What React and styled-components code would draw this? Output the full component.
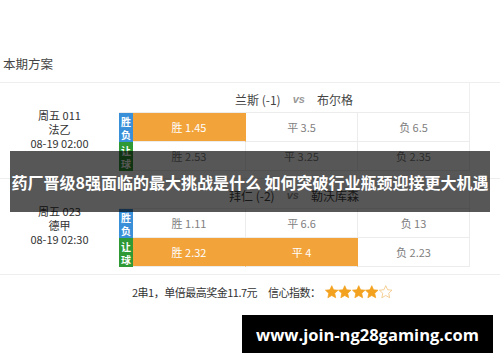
import React from 'react';
import styled, { createGlobalStyle } from 'styled-components';

const GlobalStyle = createGlobalStyle`
    html, body {
        margin: 0;
        padding: 0;
        background: #fff;
    }
    body {
        font-family: "Noto Sans CJK SC", "Liberation Sans", sans-serif;
        color: #333;
    }
`;

const matches = [
    {
        day: '周五 011',
        league: '法乙',
        time: '08-19 02:00',
        home: '兰斯 (-1)',
        away: '布尔格',
        rows: [
            { kind: 'win', odds: [['胜 1.45', true], ['平 3.5', false], ['负 6.5', false]] },
            { kind: 'handicap', odds: [['胜 2.53', false], ['平 3.25', false], ['负 2.35', false]] },
        ],
    },
    {
        day: '周五 023',
        league: '德甲',
        time: '08-19 02:30',
        home: '拜仁 (-2)',
        away: '勒沃库森',
        rows: [
            { kind: 'win', odds: [['胜 1.11', false], ['平 6.6', false], ['负 13', false]] },
            { kind: 'handicap', odds: [['胜 2.32', true], ['平 4', true], ['负 2.23', false]] },
        ],
    },
];

const Page = styled.div`
    position: relative;
    width: 500px;
    height: 362px;
    overflow: hidden;
`;

const Title = styled.div`
    height: 83px;
    box-sizing: border-box;
    display: flex;
    align-items: flex-end;
    padding: 0 0 9px 3px;
    font-size: 12.5px;
    color: #444;
    border-bottom: 1px solid #eee;
`;

const Block = styled.div`
    padding-bottom: 7px;
    border-bottom: 1px solid #eee;
`;

const Header = styled.div`
    height: 29px;
    margin-left: 119px;
    width: 351px;
    display: flex;
    justify-content: center;
    align-items: center;
    padding-top: 3px;
    box-sizing: border-box;
    font-size: 12px;
    color: #444;
    border-right: 1px solid #f0f0f0;
`;

const Vs = styled.span`
    margin: 0 12px;
    font-family: "Liberation Sans", sans-serif;
    font-weight: bold;
    font-style: italic;
    font-size: 11px;
    color: #999;
`;

const Body = styled.div`
    display: flex;
`;

const Info = styled.div`
    width: 119px;
    margin-top: -4px;
    display: flex;
    flex-direction: column;
    align-items: center;
    font-size: 11px;
    line-height: 14px;
    color: #333;
`;

const Table = styled.div`
    display: flex;
    flex-direction: column;
    width: 351px;
    border-top: 1px solid #ececec;
`;

const Row = styled.div`
    display: flex;
    height: 29px;
`;

const Badge = styled.div`
    width: 14px;
    display: flex;
    flex-direction: column;
    justify-content: center;
    align-items: center;
    background: ${p => (p.$kind === 'win' ? '#3a8fd9' : '#2f9a35')};
    color: #fff;
    font-size: 10px;
    font-weight: bold;
    line-height: 13px;
`;

const Cell = styled.div`
    flex: 1;
    display: flex;
    justify-content: center;
    align-items: center;
    font-size: 11px;
    background: ${p => (p.$hot ? '#f2a33a' : '#fff')};
    color: ${p => (p.$hot ? '#fff' : '#808080')};
    border-right: 1px solid ${p => (p.$hot ? '#f2a33a' : '#ececec')};
    border-bottom: 1px solid #ececec;
    &:nth-child(2) {
        flex: 0 0 112px;
    }
`;

const Footer = styled.div`
    display: flex;
    align-items: center;
    padding: 9px 0 0 132px;
    font-size: 11px;
    letter-spacing: -0.5px;
    color: #333;
`;

const Confidence = styled.span`
    margin-left: 11px;
`;

const Stars = styled.span`
    display: inline-flex;
    margin-left: 4px;
`;

const Banner = styled.div`
    position: absolute;
    left: 10px;
    top: 151px;
    width: 480px;
    height: 61px;
    background: rgba(0, 0, 0, 0.66);
    display: flex;
    justify-content: center;
    align-items: center;
    color: #fff;
    font-size: 16px;
    font-weight: bold;
    white-space: nowrap;
`;

const Watermark = styled.div`
    position: absolute;
    left: 242px;
    top: 315px;
    width: 251px;
    height: 38px;
    background: #000;
    display: flex;
    justify-content: center;
    align-items: center;
    color: #fff;
    font-family: "Open Sans", "DejaVu Sans", sans-serif;
    font-weight: bold;
    font-size: 16.5px;
`;

const Star = ({ filled }) => (
    <svg width="13.5" height="14" viewBox="0 0 24 24">
        <polygon
            points="12,0.8 15.3,8 23.2,8.8 17.3,14.2 18.9,22.2 12,18.2 5.1,22.2 6.7,14.2 0.8,8.8 8.7,8"
            fill={filled ? '#f3a21f' : 'none'}
            stroke={filled ? '#f3a21f' : '#f0bf72'}
            strokeWidth="1.3"
            strokeLinejoin="round"
        />
    </svg>
);

const Match = ({ match }) => (
    <Block>
        <Header>
            <span>{match.home}</span>
            <Vs>vs</Vs>
            <span>{match.away}</span>
        </Header>
        <Body>
            <Info>
                <span>{match.day}</span>
                <span>{match.league}</span>
                <span>{match.time}</span>
            </Info>
            <Table>
                {match.rows.map(row => (
                    <Row key={row.kind}>
                        <Badge $kind={row.kind}>
                            {row.kind === 'win' ? (
                                <><span>胜</span><span>负</span></>
                            ) : (
                                <><span>让</span><span>球</span></>
                            )}
                        </Badge>
                        {row.odds.map(([label, hot]) => (
                            <Cell key={label} $hot={hot}>{label}</Cell>
                        ))}
                    </Row>
                ))}
            </Table>
        </Body>
    </Block>
);

const App = () => (
    <Page>
        <GlobalStyle />
        <Title>本期方案</Title>
        {matches.map(m => (
            <Match key={m.day} match={m} />
        ))}
        <Footer>
            <span>2串1，单倍最高奖金11.7元</span>
            <Confidence>信心指数：</Confidence>
            <Stars>
                {[1, 2, 3, 4, 5].map(n => (
                    <Star key={n} filled={n <= 4} />
                ))}
            </Stars>
        </Footer>
        <Banner>药厂晋级8强面临的最大挑战是什么 如何突破行业瓶颈迎接更大机遇</Banner>
        <Watermark>www.join-ng28gaming.com</Watermark>
    </Page>
);

export default App;
